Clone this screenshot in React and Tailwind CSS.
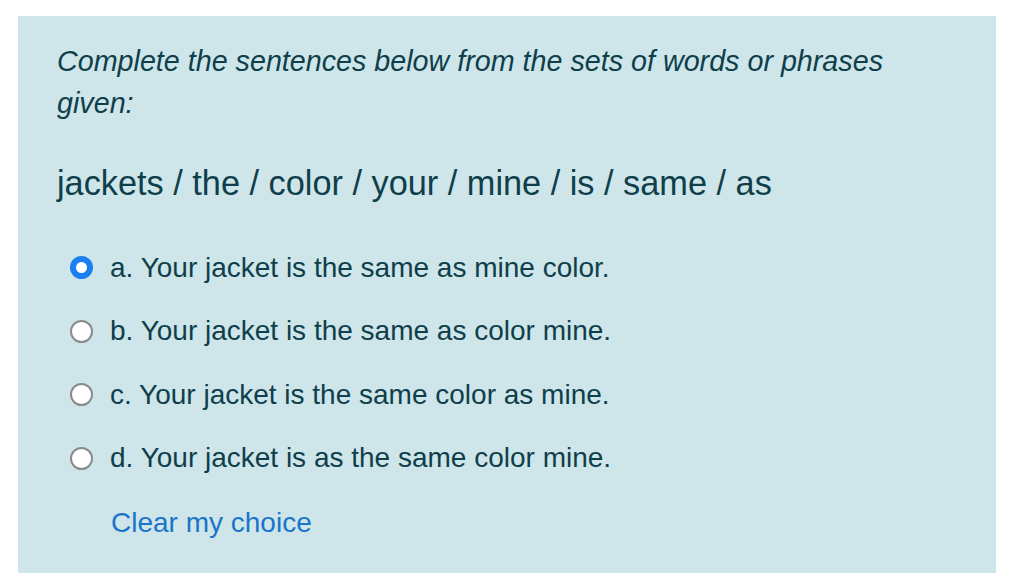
import React from "react";

const options = [
  { key: "a", text: "a. Your jacket is the same as mine color.", checked: true },
  { key: "b", text: "b. Your jacket is the same as color mine." },
  { key: "c", text: "c. Your jacket is the same color as mine." },
  { key: "d", text: "d. Your jacket is as the same color mine." },
];

const Radio = ({ checked }) =>
  checked ? (
    <span className="w-[23px] h-[23px] rounded-full border-[6px] border-[#1a7ff0] bg-white shrink-0" />
  ) : (
    <span className="w-[23px] h-[23px] rounded-full border-2 border-[#8a8a8a] bg-white shrink-0" />
  );

const App = () => {
  return (
    <div
      className="w-[1024px] h-[573px] bg-white pt-4 pl-[18px] pr-[28px] overflow-hidden"
      style={{ fontFamily: '"Liberation Sans", Arial, sans-serif' }}
    >
      <div className="h-full bg-[#cee5ea] pl-[39px] pt-[24px] text-[#0e3f4a]">
        <p className="italic text-[28.7px] leading-[42px] max-w-[850px]">
          Complete the sentences below from the sets of words or phrases given:
        </p>
        <p className="text-[34.3px] leading-[40px] mt-[39px]">
          jackets / the / color / your / mine / is / same / as
        </p>
        <div className="mt-[33px] flex flex-col">
          {options.map((o) => (
            <label key={o.key} className="flex items-center h-[63.5px] pl-[13px] gap-[17px]">
              <Radio checked={o.checked} />
              <span className="text-[28px]">{o.text}</span>
            </label>
          ))}
        </div>
        <div className="pl-[54px] mt-[16px] text-[28px] leading-[34px] text-[#1a74c9]">Clear my choice</div>
      </div>
    </div>
  );
};

export default App;
